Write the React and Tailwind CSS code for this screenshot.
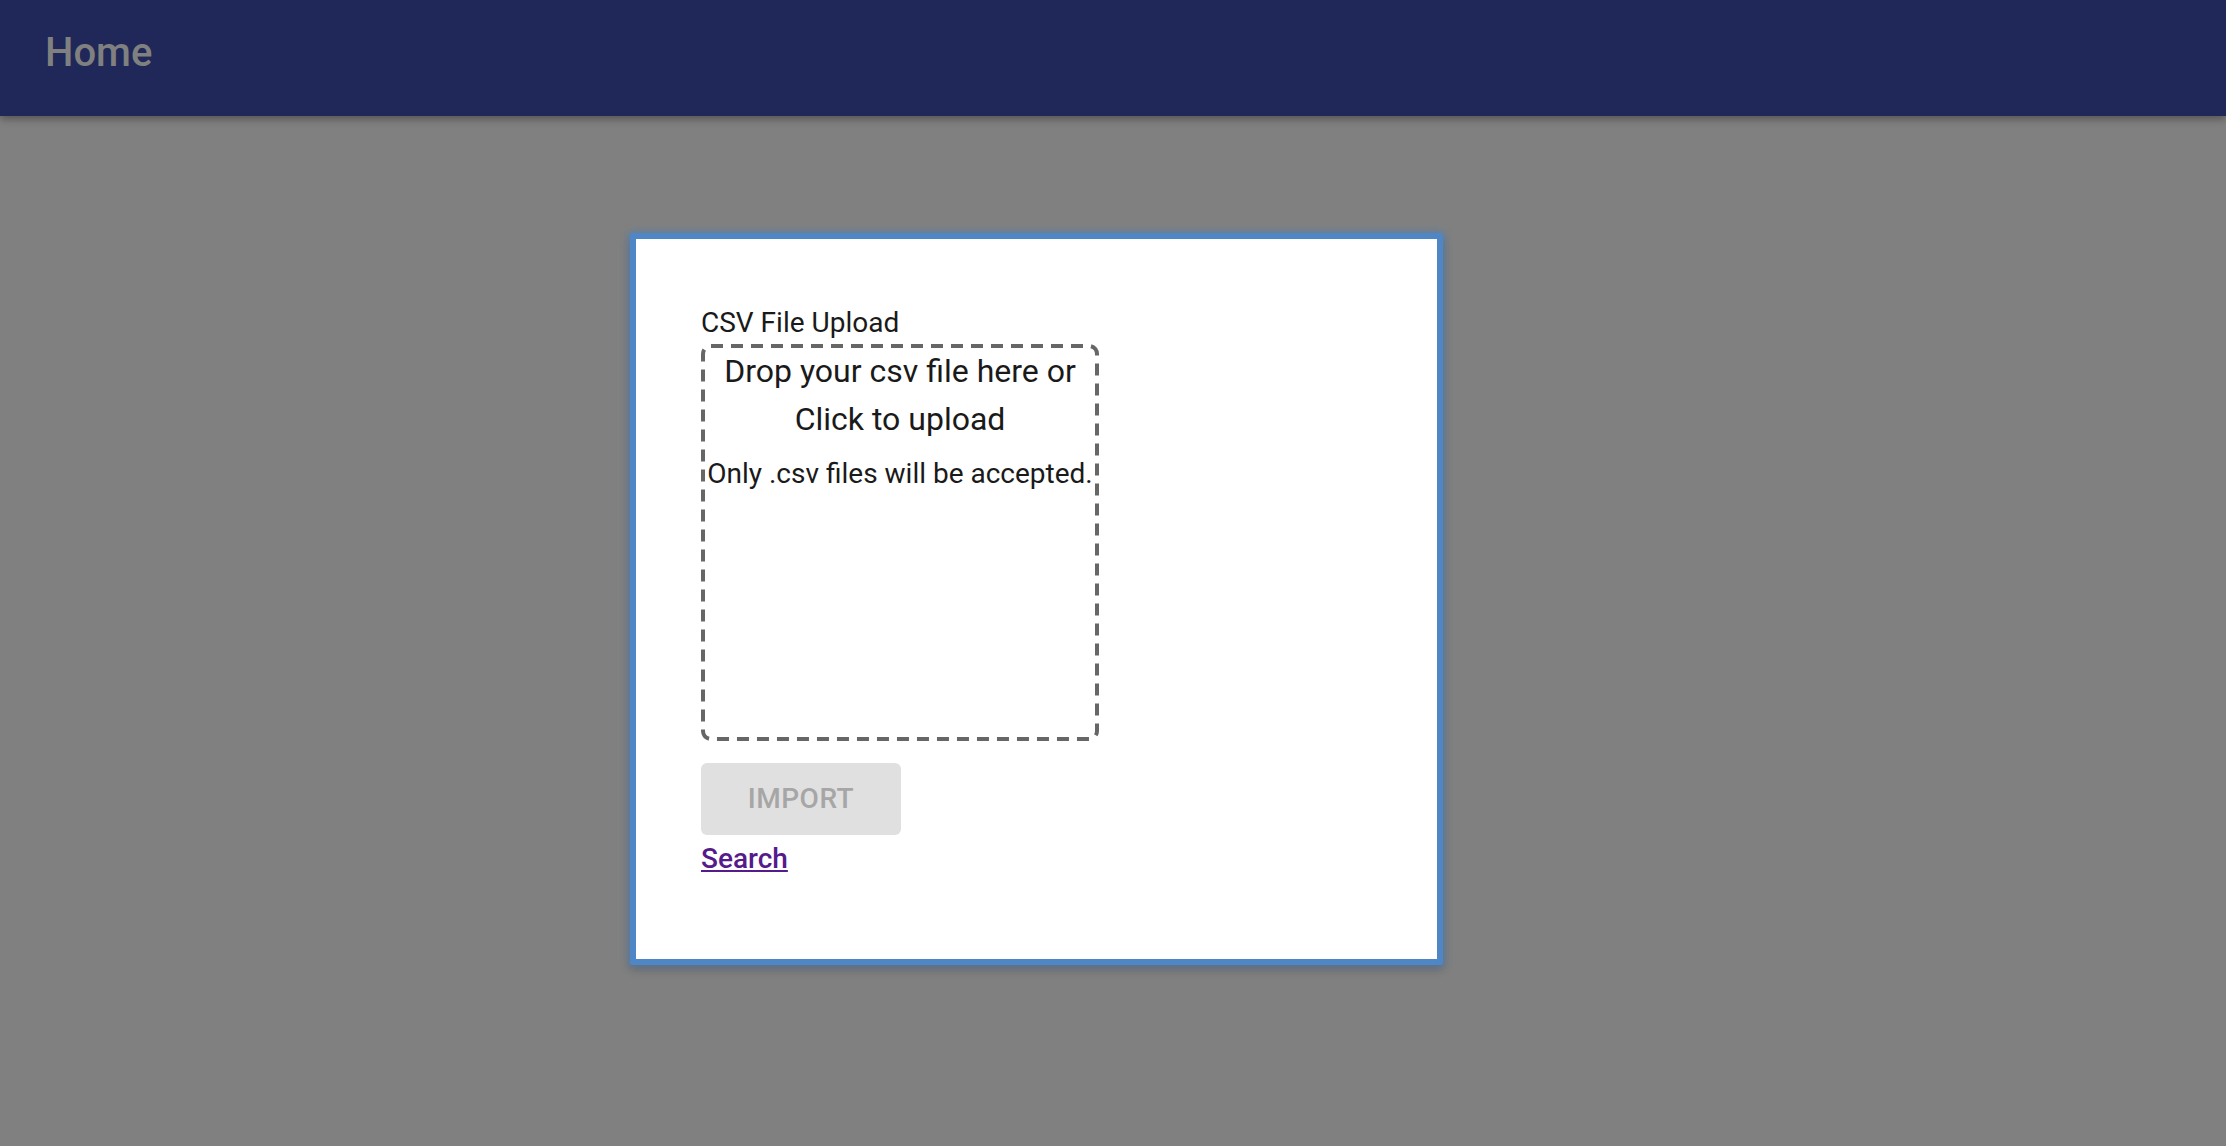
export default function App() {
  return (
    <div className="min-h-screen bg-[#808080] font-['Roboto',sans-serif]">
      <header className="relative z-10 h-[116px] bg-[#1f2858] px-[45px] pt-[33px] shadow-[0_3px_8px_rgba(0,0,0,0.35)]">
        <h1 className="text-[40px] leading-[40px] font-medium text-[#808080]">Home</h1>
      </header>

      <main className="pt-[117px] pl-[630px]">
        <div className="w-[813px] rounded-[3px] border-[6px] border-[#4f87c6] bg-white px-[65px] pt-[63px] pb-[79px] shadow-[0_0_6px_2px_rgba(79,135,198,0.55),0_4px_10px_rgba(0,0,0,0.25)]">
          <label className="block text-[28px] leading-[42px] text-[#1a1a1a]">CSV File Upload</label>

          <div className="relative h-[397px] w-[398px] cursor-pointer border-[4px] border-transparent text-center text-[#1a1a1a]">
            {/* dashed outline drawn as svg so the dash length matches */}
            <svg className="pointer-events-none absolute -inset-[4px]" width="398" height="397">
              <rect x="2" y="2" width="394" height="393" rx="8" fill="none" stroke="#666666" strokeWidth="4" strokeDasharray="12 8" />
            </svg>
            <p className="-mt-px text-[32px] leading-[48px]">
              Drop your csv file here or
              <br />
              Click to upload
            </p>
            <p className="mt-[11px] text-[28px] leading-[40px] whitespace-nowrap">Only .csv files will be accepted.</p>
          </div>

          <button
            disabled
            className="mt-[22px] block h-[72px] w-[200px] rounded-[6px] bg-[#e0e0e0] text-[28px] font-medium tracking-[0.5px] text-[#a6a6a6]"
          >
            IMPORT
          </button>

          <a href="#" className="mt-[3px] block w-fit text-[28px] leading-[42px] font-medium text-[#551a8b] underline">
            Search
          </a>
        </div>
      </main>
    </div>
  )
}
